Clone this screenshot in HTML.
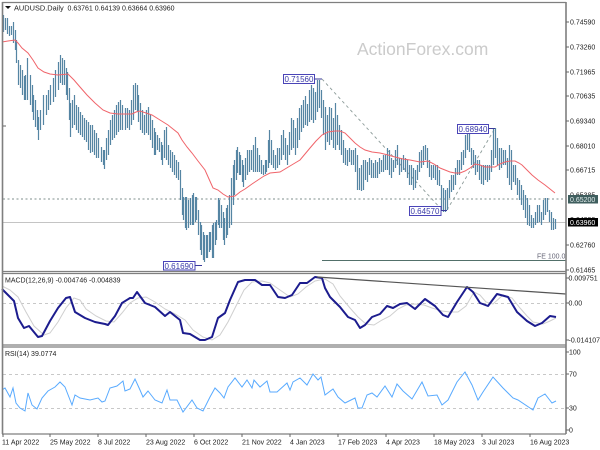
<!DOCTYPE html>
<html><head><meta charset="utf-8"><style>
html,body{margin:0;padding:0;background:#fff}
svg{display:block;filter:blur(.3px)}
text{font-family:"Liberation Sans",sans-serif;font-size:7px;fill:#222}
</style></head><body>
<svg width="600" height="450" viewBox="0 0 600 450" xmlns="http://www.w3.org/2000/svg">
<rect width="600" height="450" fill="#fff"/>
<path d="M3 199H566" stroke="#7f8f8c" stroke-width="1" stroke-dasharray="2 2.5" fill="none"/>
<path d="M3 222.5H566" stroke="#c4c4c4" stroke-width="1" fill="none"/>
<path d="M3 303.5H566M3 374.5H566M3 408.5H566" stroke="#c8c8c8" stroke-width="1" stroke-dasharray="3 3" fill="none"/>
<path d="M322 79L442 210M447 210L494 130" stroke="#8b9a98" stroke-width=".9" stroke-dasharray="3 3" fill="none"/>
<path transform="translate(.5 0)" fill="none" stroke="#5585a3" stroke-width="1.2" d="M3 15V32M5 18V30M7 18V34M9 26V36M11 26V35M13 22V43M15 30V50M16 40V63M18 60V85M20 65V88M22 70V95M24 76V100M25 75V100M27 58V100M30 75V105M32 85V112M33 95V120M35 100V127M37 110V130M38 117V140M40 110V130M43 95V125M46 95V115M48 90V110M50 85V105M53 78V102M55 70V97M58 62V90M60 55V83M62 58V85M64 60V85M66 68V95M67 72V100M69 88V120M70 103V137M72 100V128M74 95V125M76 105V130M78 107V133M80 112V135M82 115V137M84 118V140M86 120V142M88 122V150M90 125V153M92 125V152M94 130V155M96 133V158M98 138V158M101 147V162M103 150V165M104 150V169M106 138V160M108 130V155M110 120V145M112 115V140M114 110V138M116 105V135M118 102V132M120 100V130M122 105V130M125 108V130M127 108V128M129 110V130M131 100V125M133 85V120M135 83V110M137 85V112M138 95V122M140 103V130M142 110V133M144 115V135M146 110V133M148 107V135M150 115V140M152 120V148M154 128V155M155 132V155M157 135V150M159 138V152M161 142V160M162 145V165M164 130V158M166 127V160M168 145V165M170 150V168M172 152V172M174 155V175M176 160V178M178 162V180M180 170V200M182 188V215M183 197V220M185 197V228M186 197V230M188 200V228M190 198V225M192 195V225M193 193V225M195 197V222M196 197V220M198 210V235M200 222V250M201 225V255M203 232V260M204 235V262M206 235V258M207 235V258M209 232V252M210 232V250M212 225V258M213 223V258M215 222V245M216 220V240M218 198V225M219 200V228M221 205V228M223 212V240M224 218V245M226 208V238M227 205V235M229 195V228M231 178V225M233 165V205M234 160V195M236 150V180M237 147V173M239 152V175M240 155V175M242 160V182M243 165V187M245 158V180M247 150V175M249 150V172M251 150V170M253 145V172M255 137V172M257 148V172M259 155V172M261 160V174M263 165V175M265 160V174M266 160V172M268 140V168M269 130V163M271 140V165M273 150V168M275 155V170M277 148V168M279 148V165M281 135V160M283 130V155M285 138V160M287 145V165M289 132V155M291 118V150M293 120V148M295 128V155M297 118V148M299 108V140M301 105V132M303 100V128M305 96V125M307 104V126M309 90V122M311 85V120M313 88V123M315 92V120M317 80V112M319 80V108M321 90V118M323 100V135M325 107V150M327 115V142M329 107V145M331 108V140M333 118V148M335 103V150M337 115V145M339 125V150M341 130V155M343 140V163M345 148V165M347 150V166M349 148V162M351 150V165M353 150V165M355 148V172M357 155V190M359 168V190M361 165V191M363 160V190M365 160V180M367 162V182M369 158V175M371 160V178M373 163V178M375 160V178M377 162V178M379 158V174M381 160V172M383 155V172M385 155V170M387 148V170M389 150V175M391 158V178M393 160V172M395 150V168M397 145V165M399 158V175M401 158V172M403 155V170M405 158V172M407 160V178M409 165V185M411 165V185M413 168V190M415 170V188M417 165V180M419 152V172M421 150V168M423 146V165M425 145V160M427 148V168M429 160V177M431 165V180M433 165V178M435 165V180M437 165V185M439 170V186M441 185V210M443 188V212M445 190V212M447 188V210M449 180V198M451 175V192M453 175V190M455 168V185M457 160V175M459 160V175M461 152V170M463 150V165M465 135V158M467 130V150M469 132V152M471 148V165M473 150V168M475 155V175M477 160V172M479 160V180M481 165V184M483 165V185M485 165V180M487 165V182M489 165V180M491 150V172M493 128V165M495 128V158M497 138V165M499 148V170M501 148V168M503 150V165M505 150V165M507 158V178M509 145V185M511 150V190M513 165V182M515 165V185M517 178V195M519 180V200M521 185V205M523 190V210M525 195V218M527 198V225M529 205V226M531 215V228M533 218V228M535 212V225M537 205V223M539 205V222M541 212V225M543 200V220M545 198V215M547 198V212M549 210V222M551 212V230M553 218V230M555 219V229"/>
<polyline fill="none" stroke="#f0646a" stroke-width="1" points="2,42 8,41 15,40 18,43 22,48 28,53 33,60 38,68 44,72 50,74 58,75 68,74 74,80 80,87 87,95 95,103 103,110 110,113 118,114 128,114 132,114 136,112 140,111 146,113 152,115 160,120 168,125 173,129 178,133 182,140 187,147 192,153 198,161 205,170 209,179 213,188 218,190 223,194 228,197 235,196 240,192 245,189 252,184 258,180 264,176 270,173 280,172 290,166 295,163 300,160 305,154 310,148 316,141 322,135 328,132 335,131 340,131 345,133 350,138 355,143 360,147 365,150 372,152 380,153 388,155 395,157 403,159 410,160 415,161 420,162 428,161 434,164 440,168 445,170 450,172 455,173 460,173 465,171 470,168 475,164 480,165 485,167 490,167 495,167 500,164 505,162 510,161 515,161 519,163 522,165 527,170 532,175 538,180 545,185 550,189 555,193"/>
<path d="M322 260.5H566" stroke="#52706a" stroke-width="1"/>
<text x="537" y="258.500" style="fill:#667">FE 100.0</text>
<text x="357" y="55" style="font-size:17.5px;fill:#cbcbcb">ActionForex.com</text>
<path d="M5 6h6l-3 3z" fill="#111"/>
<text x="14" y="10.500" style="font-size:7.4px">AUDUSD.Daily</text>
<text x="67.500" y="10.500">0.63761 0.64139 0.63664 0.63960</text>
<g fill="#fff" stroke="#4a44b8" stroke-width="1">
<rect x="283.500" y="74.500" width="31" height="9"/>
<rect x="457.500" y="124.500" width="31" height="9"/>
<rect x="409.500" y="206.500" width="31.500" height="9"/>
<rect x="163.500" y="261.500" width="31.500" height="8.500"/>
</g>
<path d="M315 79H322M489 128.500H495M441 210.500H447M195 265.500H202" stroke="#3a3a9a" stroke-width="1" fill="none"/>
<text x="284.500" y="82" style="fill:#3a3aa8;font-size:8px">0.71560</text>
<text x="458.500" y="132" style="fill:#3a3aa8;font-size:8px">0.68940</text>
<text x="410.500" y="214" style="fill:#3a3aa8;font-size:8px">0.64570</text>
<text x="164.500" y="268.800" style="fill:#3a3aa8;font-size:8px">0.61690</text>
<polyline fill="none" stroke="#cfcfcf" stroke-width="1" points="2,286 10,290 18,297 26,312 34,326 44,335 50,333 58,322 66,308 74,298 80,300 86,309 96,316 106,321 114,322 122,313 130,303 138,298 146,297 155,302 165,309 175,314 185,320 193,330 203,337 212,340 220,335 228,322 236,306 244,290 252,282 262,281 270,283 280,290 290,297 298,294 306,287 315,281 325,279 333,284 340,296 350,308 358,317 366,324 374,325 382,320 390,316 398,309 406,305 415,304 424,305 432,308 442,311 450,312 458,312 466,306 474,292 480,295 486,302 493,304 503,295 512,298 520,308 527,316 533,322 543,324 550,321 556,318"/>
<polyline fill="none" stroke="#1c1c8e" stroke-width="2" stroke-linejoin="round" points="2,289 8,295 14,301 18,318 24,328 29,326 38,337 42,336 50,321 58,308 66,298 70,297 75,312 85,318 95,322 105,324 108,325 115,316 122,303 130,298 133,298 137,292 145,303 155,307 165,316 170,312 180,320 183,333 190,334 200,340 205,340 212,337 218,318 225,313 230,300 238,282 245,280 255,280 262,285 270,285 278,297 285,298 292,295 300,283 307,283 315,277 322,278 325,288 330,297 340,307 348,317 355,320 360,328 365,325 372,317 380,314 387,306 393,308 400,304 407,303 415,309 425,299 435,306 443,315 448,317 457,302 467,287 473,292 480,303 488,306 497,294 508,297 517,312 527,321 535,326 542,323 550,316 556,317"/>
<path d="M317 277L566 294" stroke="#555" stroke-width="1.200" fill="none"/>
<polyline fill="none" stroke="#58aaff" stroke-width="1" points="2,390 5,388 10,397 13,388 16,403 20,408 25,411 28,393 32,405 37,409 42,398 48,391 55,387 60,382 65,387 72,405 75,395 80,398 90,400 98,398 102,402 105,401 110,388 117,386 123,381 125,391 130,389 135,379 140,390 143,397 148,391 155,400 162,403 167,390 170,400 177,400 183,412 192,400 197,408 203,411 210,397 215,388 220,393 224,398 228,387 235,378 242,387 247,380 252,388 254,380 260,387 267,381 270,392 277,392 287,383 290,390 293,382 300,378 307,385 313,374 318,380 321,377 325,395 333,389 338,397 345,403 355,398 358,408 362,408 367,395 372,393 377,397 385,386 392,397 397,384 403,391 412,399 422,382 428,396 437,395 442,405 448,400 457,382 465,372 472,385 478,400 483,392 493,377 503,388 513,398 518,400 533,410 538,398 545,394 552,403 556,401"/>
<g stroke="#7f7f7f" fill="none">
<path d="M2.500 2V434M566 2V434" stroke-width="1.600"/>
<path d="M2 2.500H566M2 271.500H566M2 273.500H566M2 345H566M2 347H566M2 434H566" stroke-width="1.200"/>
</g>
<path d="M3 126h3M566 22h3M566 47h3M566 72h3M566 96h3M566 121h3M566 146h3M566 170h3M566 245h3M566 270h3M566 278h3M566 303h3M566 340h3M566 352h3M566 374h3M566 408h3M566 430h3M3 434v3M50 434v3M98 434v3M146 434v3M194 434v3M242 434v3M290 434v3M338 434v3M386 434v3M434 434v3M482 434v3M530 434v3" stroke="#666" fill="none"/>
<text x="570" y="24.500">0.74590</text>
<text x="570" y="49.500">0.73260</text>
<text x="570" y="74.500">0.71965</text>
<text x="570" y="98.500">0.70635</text>
<text x="570" y="123.500">0.69340</text>
<text x="570" y="148.500">0.68010</text>
<text x="570" y="172.500">0.66715</text>
<text x="570" y="197.500">0.65385</text>
<rect x="568" y="195" width="30" height="8.500" fill="#3f5e5e"/>
<text x="570" y="202" style="fill:#e4eeee">0.65200</text>
<text x="570" y="222">0.64090</text>
<rect x="568" y="218" width="30" height="8.500" fill="#000"/>
<text x="570" y="225" style="fill:#fff">0.63960</text>
<text x="570" y="247.500">0.62760</text>
<text x="570" y="272.500">0.61465</text>
<text x="568.500" y="280.500">0.009751</text>
<text x="568.500" y="305.500">0.00</text>
<text x="568.500" y="342.500">-0.014107</text>
<text x="569" y="354.500">100</text>
<text x="569" y="376.500">70</text>
<text x="569" y="410.500">30</text>
<text x="569" y="432.500">0</text>
<text x="5" y="282.500">MACD(12,26,9) -0.004746 -0.004839</text>
<text x="5" y="356">RSI(14) 39.0774</text>
<text x="2" y="444.500">11 Apr 2022</text>
<text x="50" y="444.500">25 May 2022</text>
<text x="98" y="444.500">8 Jul 2022</text>
<text x="146" y="444.500">23 Aug 2022</text>
<text x="194" y="444.500">6 Oct 2022</text>
<text x="242" y="444.500">21 Nov 2022</text>
<text x="290" y="444.500">4 Jan 2023</text>
<text x="338" y="444.500">17 Feb 2023</text>
<text x="386" y="444.500">4 Apr 2023</text>
<text x="434" y="444.500">18 May 2023</text>
<text x="482" y="444.500">3 Jul 2023</text>
<text x="530" y="444.500">16 Aug 2023</text>
</svg>
</body></html>
